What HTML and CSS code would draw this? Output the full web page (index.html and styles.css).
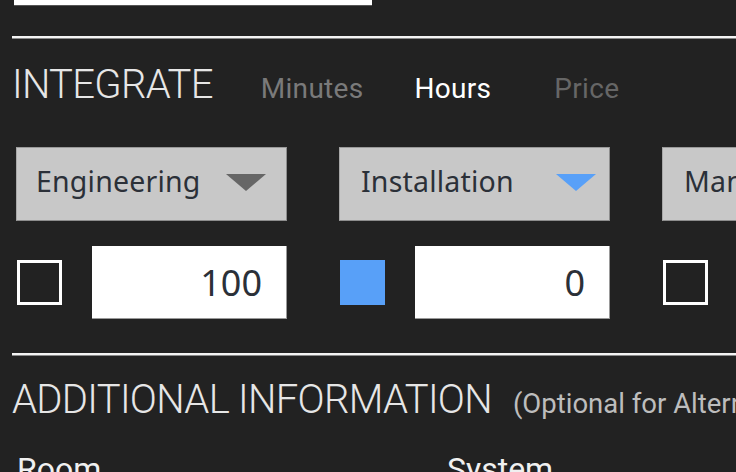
FILE: index.html
```html
<!DOCTYPE html>
<html>
<head>
<meta charset="utf-8">
<link rel="stylesheet" href="styles.css">
</head>
<body>
<div class="page">
  <div class="top-field"></div>
  <div class="divider first"></div>

  <div class="section-head">
    <h2 class="title">INTEGRATE</h2>
    <div class="tabs">
      <span class="tab tab-minutes">Minutes</span>
      <span class="tab tab-active">Hours</span>
      <span class="tab tab-price">Price</span>
    </div>
  </div>

  <div class="grid">
    <div class="col">
      <div class="select">
        <span class="select-label">Engineering</span>
        <span class="arrow"></span>
      </div>
      <div class="value-row">
        <span class="check"></span>
        <div class="num">100</div>
      </div>
    </div>
    <div class="col">
      <div class="select">
        <span class="select-label">Installation</span>
        <span class="arrow arrow-blue"></span>
      </div>
      <div class="value-row">
        <span class="check checked"></span>
        <div class="num">0</div>
      </div>
    </div>
    <div class="col">
      <div class="select">
        <span class="select-label">Management</span>
        <span class="arrow"></span>
      </div>
      <div class="value-row">
        <span class="check"></span>
        <div class="num">0</div>
      </div>
    </div>
  </div>

  <div class="divider second"></div>

  <div class="section-head add-head">
    <h2 class="title">ADDITIONAL INFORMATION</h2>
    <span class="note">(Optional for Alternates)</span>
  </div>

  <div class="labels">
    <span class="label">Room</span>
    <span class="label">System</span>
  </div>
</div>
</body>
</html>
```

FILE: styles.css
```css
html, body {
  margin: 0;
  padding: 0;
  background: #222222;
  overflow: hidden;
}
.page {
  width: 736px;
  height: 472px;
  overflow: hidden;
  padding-left: 12px;
  box-sizing: border-box;
  font-family: Roboto, "Liberation Sans", sans-serif;
}
.top-field {
  width: 358px;
  height: 5px;
  margin-left: 2px;
  background: #ffffff;
  border-bottom: 1px solid #555;
}
.divider {
  width: 800px;
  height: 2px;
  background: #f4f4f4;
  border-bottom: 1px solid #8a8a8a;
}
.divider.first { margin-top: 30px; }
.divider.second { margin-top: 34px; }

.section-head {
  display: flex;
  align-items: baseline;
  height: 60px;
  margin-top: 26px;
  white-space: nowrap;
}
.title {
  margin: 0;
  font-family: Roboto, sans-serif;
  font-weight: 300;
  font-size: 40px;
  line-height: 40px;
  color: #e6e6e6;
  letter-spacing: -0.7px;
}
.tabs {
  display: flex;
  margin-left: 48px;
  gap: 51px;
}
.tab {
  font-size: 28px;
  color: #7a7a7a;
  letter-spacing: 0.3px;
}
.tab-active { color: #ffffff; }
.tab-price { color: #666666; margin-left: 12px; }

.grid {
  display: flex;
  gap: 52px;
  margin-top: 22px;
  padding-left: 4px;
}
.col {
  width: 271px;
  flex: none;
}
.select {
  background: #c8c8c8;
  border: 1px solid #8d8d8d;
  border-top-color: #9a9a9a;
  border-left-color: #a8a8a8;
  display: flex;
  align-items: center;
  padding: 0 20px 6px 19px;
  box-sizing: border-box;
  height: 74px;
}
.select-label {
  flex: 1;
  font-family: "Noto Sans", sans-serif;
  font-size: 28.5px;
  color: #2b3038;
  letter-spacing: 0.2px;
}
.col + .col .select-label { padding-left: 2px; }
.arrow {
  width: 0;
  height: 0;
  border-left: 20px solid transparent;
  border-right: 20px solid transparent;
  border-top: 17px solid #666666;
  margin-top: 2px;
}
.arrow-blue {
  border-top-color: #58a0f8;
  margin-right: -7px;
}

.value-row {
  display: flex;
  align-items: center;
  margin-top: 25px;
}
.check {
  width: 45px;
  height: 45px;
  box-sizing: border-box;
  border: 3px solid #ffffff;
  margin-left: 1px;
  flex: none;
}
.check.checked {
  background: #58a0f8;
  border-color: #58a0f8;
}
.num {
  margin-left: 30px;
  width: 195px;
  height: 73px;
  box-sizing: border-box;
  background: #ffffff;
  border-right: 1px solid #999;
  border-bottom: 1px solid #999;
  font-family: "Noto Sans", sans-serif;
  font-size: 36px;
  color: #2b3038;
  text-align: right;
  padding-right: 24px;
  line-height: 74px;
}

.add-head {
  margin-top: 24px;
}
.note {
  margin-left: 21px;
  font-size: 27.5px;
  color: #bdbdbd;
}
.labels {
  display: flex;
  margin-top: 10px;
  padding-left: 5px;
}
.label {
  flex: none;
  width: 430px;
  font-size: 32px;
  color: #f0f0f0;
}
```
